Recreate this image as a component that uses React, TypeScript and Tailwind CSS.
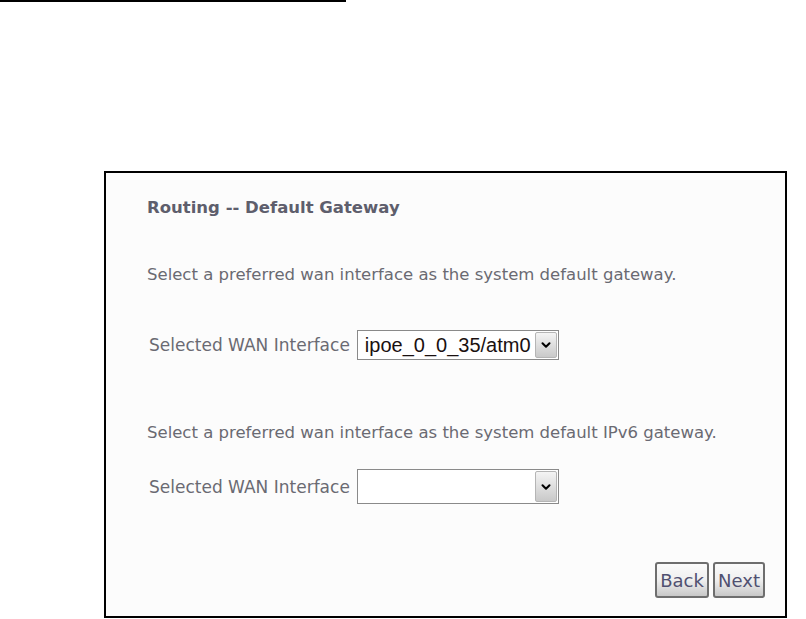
import { ChevronDown } from 'lucide-react';

// Routing -- Default Gateway page (router web UI capture)

function Dropdown({ value, height }: { value?: string; height: string }) {
  return (
    <div className={`flex w-[202px] border border-[#8a8a8a] bg-white ${height}`}>
      <div className="flex flex-1 items-center pl-[7px] font-['Liberation_Sans',Arial,sans-serif] text-[20px] leading-none text-[#1a1010]">
        {value}
      </div>
      <div className="m-[1px] flex w-[22px] items-center justify-center rounded-[2px] border border-[#b5b5b5] bg-gradient-to-b from-[#f4f4f4] to-[#c9c9c9]">
        <ChevronDown className="h-[14px] w-[14px] text-black" strokeWidth={3.5} />
      </div>
    </div>
  );
}

function Row({ value, height }: { value?: string; height: string }) {
  return (
    <div className="flex items-center">
      <span className="ml-[2px] mr-[7px] text-[17px] leading-5 text-[#6a6a72]">Selected WAN Interface</span>
      <Dropdown value={value} height={height} />
    </div>
  );
}

function Btn({ label, w }: { label: string; w: string }) {
  return (
    <button
      type="button"
      className={`flex h-[36px] ${w} items-center justify-center rounded-[3px] border-2 border-[#6e6e6e] bg-gradient-to-b from-[#fbfbfb] via-[#efefef] to-[#c8c8c8] text-[18px] text-[#505070]`}
    >
      {label}
    </button>
  );
}

export default function App() {
  return (
    <div className="min-h-[619px] bg-white font-['DejaVu_Sans',Verdana,sans-serif]">
      <div className="h-[2px] w-[346px] bg-black" />
      <div className="ml-[104px] mt-[169px] flex h-[447px] w-[683px] flex-col border-2 border-black bg-[#fcfcfc] pl-[41px] pr-[20px] pt-[25px]">
        <h1 className="text-[16.5px] font-bold leading-5 text-[#5e5e6c]">Routing -- Default Gateway</h1>
        <p className="mt-[47px] text-[16.5px] leading-5 text-[#6a6a72]">
          Select a preferred wan interface as the system default gateway.
        </p>
        <div className="mt-[45px]">
          <Row value="ipoe_0_0_35/atm0" height="h-[30px]" />
        </div>
        <p className="mt-[63px] text-[16.5px] leading-5 text-[#6a6a72]">
          Select a preferred wan interface as the system default IPv6 gateway.
        </p>
        <div className="mt-[26px]">
          <Row height="h-[35px]" />
        </div>
        <div className="mt-[58px] flex justify-end gap-[4px]">
          <Btn label="Back" w="w-[54px]" />
          <Btn label="Next" w="w-[52px]" />
        </div>
      </div>
    </div>
  );
}
